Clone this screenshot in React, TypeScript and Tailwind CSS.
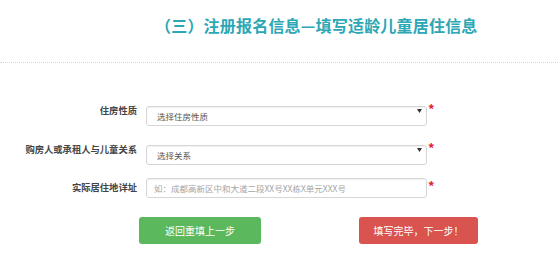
import { useState } from "react";

const font = { fontFamily: '"Noto Sans CJK SC", "Noto Sans", sans-serif' };

const Star = () => (
  <span className="ml-[1px] self-start mt-[1px] text-[13px] font-bold leading-none text-[#e0232f]">*</span>
);

const Arrow = () => (
  <svg className="absolute right-[5px] top-[8px]" width="5" height="4" viewBox="0 0 5 4">
    <path d="M0 0 L5 0 L2.5 4 Z" fill="#333" />
  </svg>
);

const App = () => {
  const [house, setHouse] = useState("");
  const [relation, setRelation] = useState("");
  const [address, setAddress] = useState("");

  return (
    <div className="w-[558px] h-[259px] bg-white overflow-hidden" style={font}>
      <div className="h-[63px] pl-[155px] pt-[14px] border-b border-dotted border-[#d5d5d5]">
        <h1 className="text-[16px] font-bold leading-[22px] text-[#2ba7b5] tracking-[0.2px]">
          （三）注册报名信息—填写适龄儿童居住信息
        </h1>
      </div>

      <div className="flex flex-col gap-[18.5px] pt-[38px]">
        <div className="flex items-center h-[20px]">
          <label className="w-[137px] text-right text-[9.3px] font-bold text-[#444]">住房性质</label>
          <div className="relative ml-[9px] w-[281px] h-[20px]">
            <select
              value={house}
              onChange={(e) => setHouse(e.target.value)}
              className="w-full h-full appearance-none rounded-[3px] border border-[#d6d6d6] bg-white pl-[10px] text-[8.5px] text-[#555] shadow-[inset_0_1px_1px_rgba(0,0,0,0.06)] outline-none"
            >
              <option value="">选择住房性质</option>
              <option value="own">自有住房</option>
              <option value="rent">租赁住房</option>
            </select>
            <Arrow />
          </div>
          <Star />
        </div>

        <div className="flex items-center h-[20px]">
          <label className="w-[137px] text-right text-[9.3px] font-bold text-[#444]">购房人或承租人与儿童关系</label>
          <div className="relative ml-[9px] w-[281px] h-[20px]">
            <select
              value={relation}
              onChange={(e) => setRelation(e.target.value)}
              className="w-full h-full appearance-none rounded-[3px] border border-[#d6d6d6] bg-white pl-[10px] text-[8.5px] text-[#555] shadow-[inset_0_1px_1px_rgba(0,0,0,0.06)] outline-none"
            >
              <option value="">选择关系</option>
              <option value="parent">父母</option>
              <option value="other">其他</option>
            </select>
            <Arrow />
          </div>
          <Star />
        </div>

        <div className="flex items-center h-[20px]">
          <label className="w-[137px] text-right text-[9.3px] font-bold text-[#444]">实际居住地详址</label>
          <input
            type="text"
            value={address}
            onChange={(e) => setAddress(e.target.value)}
            placeholder="如：成都高新区中和大道二段XX号XX栋X单元XXX号"
            className="ml-[9px] w-[281px] h-[20px] rounded-[3px] border border-[#d6d6d6] bg-white pl-[7px] text-[8.5px] text-[#555] placeholder:text-[#a5a5a5] shadow-[inset_0_1px_1px_rgba(0,0,0,0.06)] outline-none"
          />
          <Star />
        </div>
      </div>

      <div className="flex pl-[139px] pt-[19px]">
        <button className="w-[122px] h-[27px] rounded-[3px] bg-[#5cb85c] text-[10px] text-white">
          返回重填上一步
        </button>
        <button className="ml-[98px] w-[119px] h-[27px] rounded-[3px] bg-[#d9534f] text-[10px] text-white">
          填写完毕，下一步！
        </button>
      </div>
    </div>
  );
};

export default App;
